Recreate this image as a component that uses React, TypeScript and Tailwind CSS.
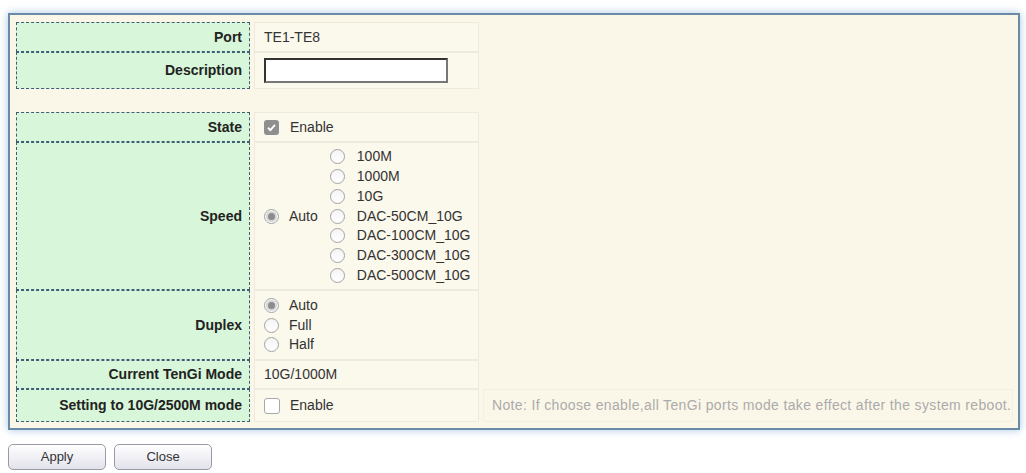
import React from "react";

const Radio = ({ checked = false }: { checked?: boolean }) => (
  <span className="inline-flex items-center justify-center w-[15px] h-[15px] rounded-full border border-[#a3a3a3] bg-gradient-to-b from-[#f4f4f4] to-white shrink-0">
    {checked && <span className="w-[7px] h-[7px] rounded-full bg-[#8c8c8c] ring-2 ring-[#d6d6d6]" />}
  </span>
);

const Checkbox = ({ checked = false }: { checked?: boolean }) =>
  checked ? (
    <span className="inline-flex items-center justify-center w-[15px] h-[15px] rounded-[3px] bg-[#8f8f8f] shrink-0">
      <svg width="11" height="11" viewBox="0 0 12 12">
        <path d="M2.2 6.3 L4.8 8.8 L9.8 3.2" stroke="#fff" strokeWidth="2" fill="none" />
      </svg>
    </span>
  ) : (
    <span className="inline-block w-[16px] h-[16px] rounded-[3px] border border-[#a8a8a8] bg-white shrink-0" />
  );

const Label = ({ children, h }: { children: React.ReactNode; h: string }) => (
  <div
    className={`${h} flex items-center justify-end pr-[7px] border border-dashed border-[#3f5e74] bg-[#d8f6d9] font-bold text-[14px] text-[#222]`}
  >
    {children}
  </div>
);

const Value = ({ children, className = "" }: { children?: React.ReactNode; className?: string }) => (
  <div className={`border border-[#efebdc] bg-[#fbf8ec] flex items-center pl-[9px] ${className}`}>{children}</div>
);

export default function App() {
  const speeds = ["100M", "1000M", "10G", "DAC-50CM_10G", "DAC-100CM_10G", "DAC-300CM_10G", "DAC-500CM_10G"];
  return (
    <div className="w-[1026px] h-[473px] bg-white pt-[13px] pl-[8px] text-[#333] text-[14px]" style={{ fontFamily: '"Liberation Sans", Arial, sans-serif' }}>
      <div className="w-[1012px] h-[417px] border-2 border-[#6a8aa5] bg-[#fbf7e8] shadow-[0_0_8px_rgba(110,160,210,0.6)] pt-[7px] pl-[6px] pr-[5px]">
        <div className="grid grid-cols-[234px_225px_1fr] gap-x-[4px]">
          <Label h="h-[30px]">Port</Label>
          <Value className="h-[30px]">TE1-TE8</Value>
          <div />

          <Label h="h-[37px]">Description</Label>
          <Value className="h-[37px]">
            <div className="w-[184px] h-[25px] bg-white border-2 border-[#333] border-r-[#777] border-b-[#777]" />
          </Value>
          <div />

          <div className="h-[23px] col-span-3" />

          <Label h="h-[30px]">State</Label>
          <Value className="h-[30px] gap-[11px]">
            <Checkbox checked />
            <span>Enable</span>
          </Value>
          <div />

          <Label h="h-[148px]">Speed</Label>
          <Value className="h-[148px]">
            <Radio checked />
            <span className="ml-[10px]">Auto</span>
            <div className="ml-[12px] flex flex-col">
              {speeds.map((s) => (
                <div key={s} className="h-[19.7px] flex items-center">
                  <Radio />
                  <span className="ml-[12px]">{s}</span>
                </div>
              ))}
            </div>
          </Value>
          <div />

          <Label h="h-[70px]">Duplex</Label>
          <Value className="h-[70px]">
            <div className="flex flex-col">
              {["Auto", "Full", "Half"].map((d, i) => (
                <div key={d} className="h-[19.5px] flex items-center">
                  <Radio checked={i === 0} />
                  <span className="ml-[10px]">{d}</span>
                </div>
              ))}
            </div>
          </Value>
          <div />

          <Label h="h-[29px]">Current TenGi Mode</Label>
          <Value className="h-[29px]">10G/1000M</Value>
          <div />

          <Label h="h-[33px]">Setting to 10G/2500M mode</Label>
          <Value className="h-[33px] gap-[10px]">
            <Checkbox />
            <span>Enable</span>
          </Value>
          <div className="h-[33px] border border-[#f3efe2] flex items-center pl-[8px] text-[#ababab] text-[14px] tracking-[0.35px] whitespace-nowrap">
            Note: If choose enable,all TenGi ports mode take effect after the system reboot.
          </div>
        </div>
      </div>
      <div className="flex gap-[8px] mt-[14px]">
        {["Apply", "Close"].map((b) => (
          <button
            key={b}
            className="w-[98px] h-[26px] rounded-[5px] border border-[#9a9aa6] bg-gradient-to-b from-white to-[#e2e2ec] text-[13px] text-[#333]"
          >
            {b}
          </button>
        ))}
      </div>
    </div>
  );
}
